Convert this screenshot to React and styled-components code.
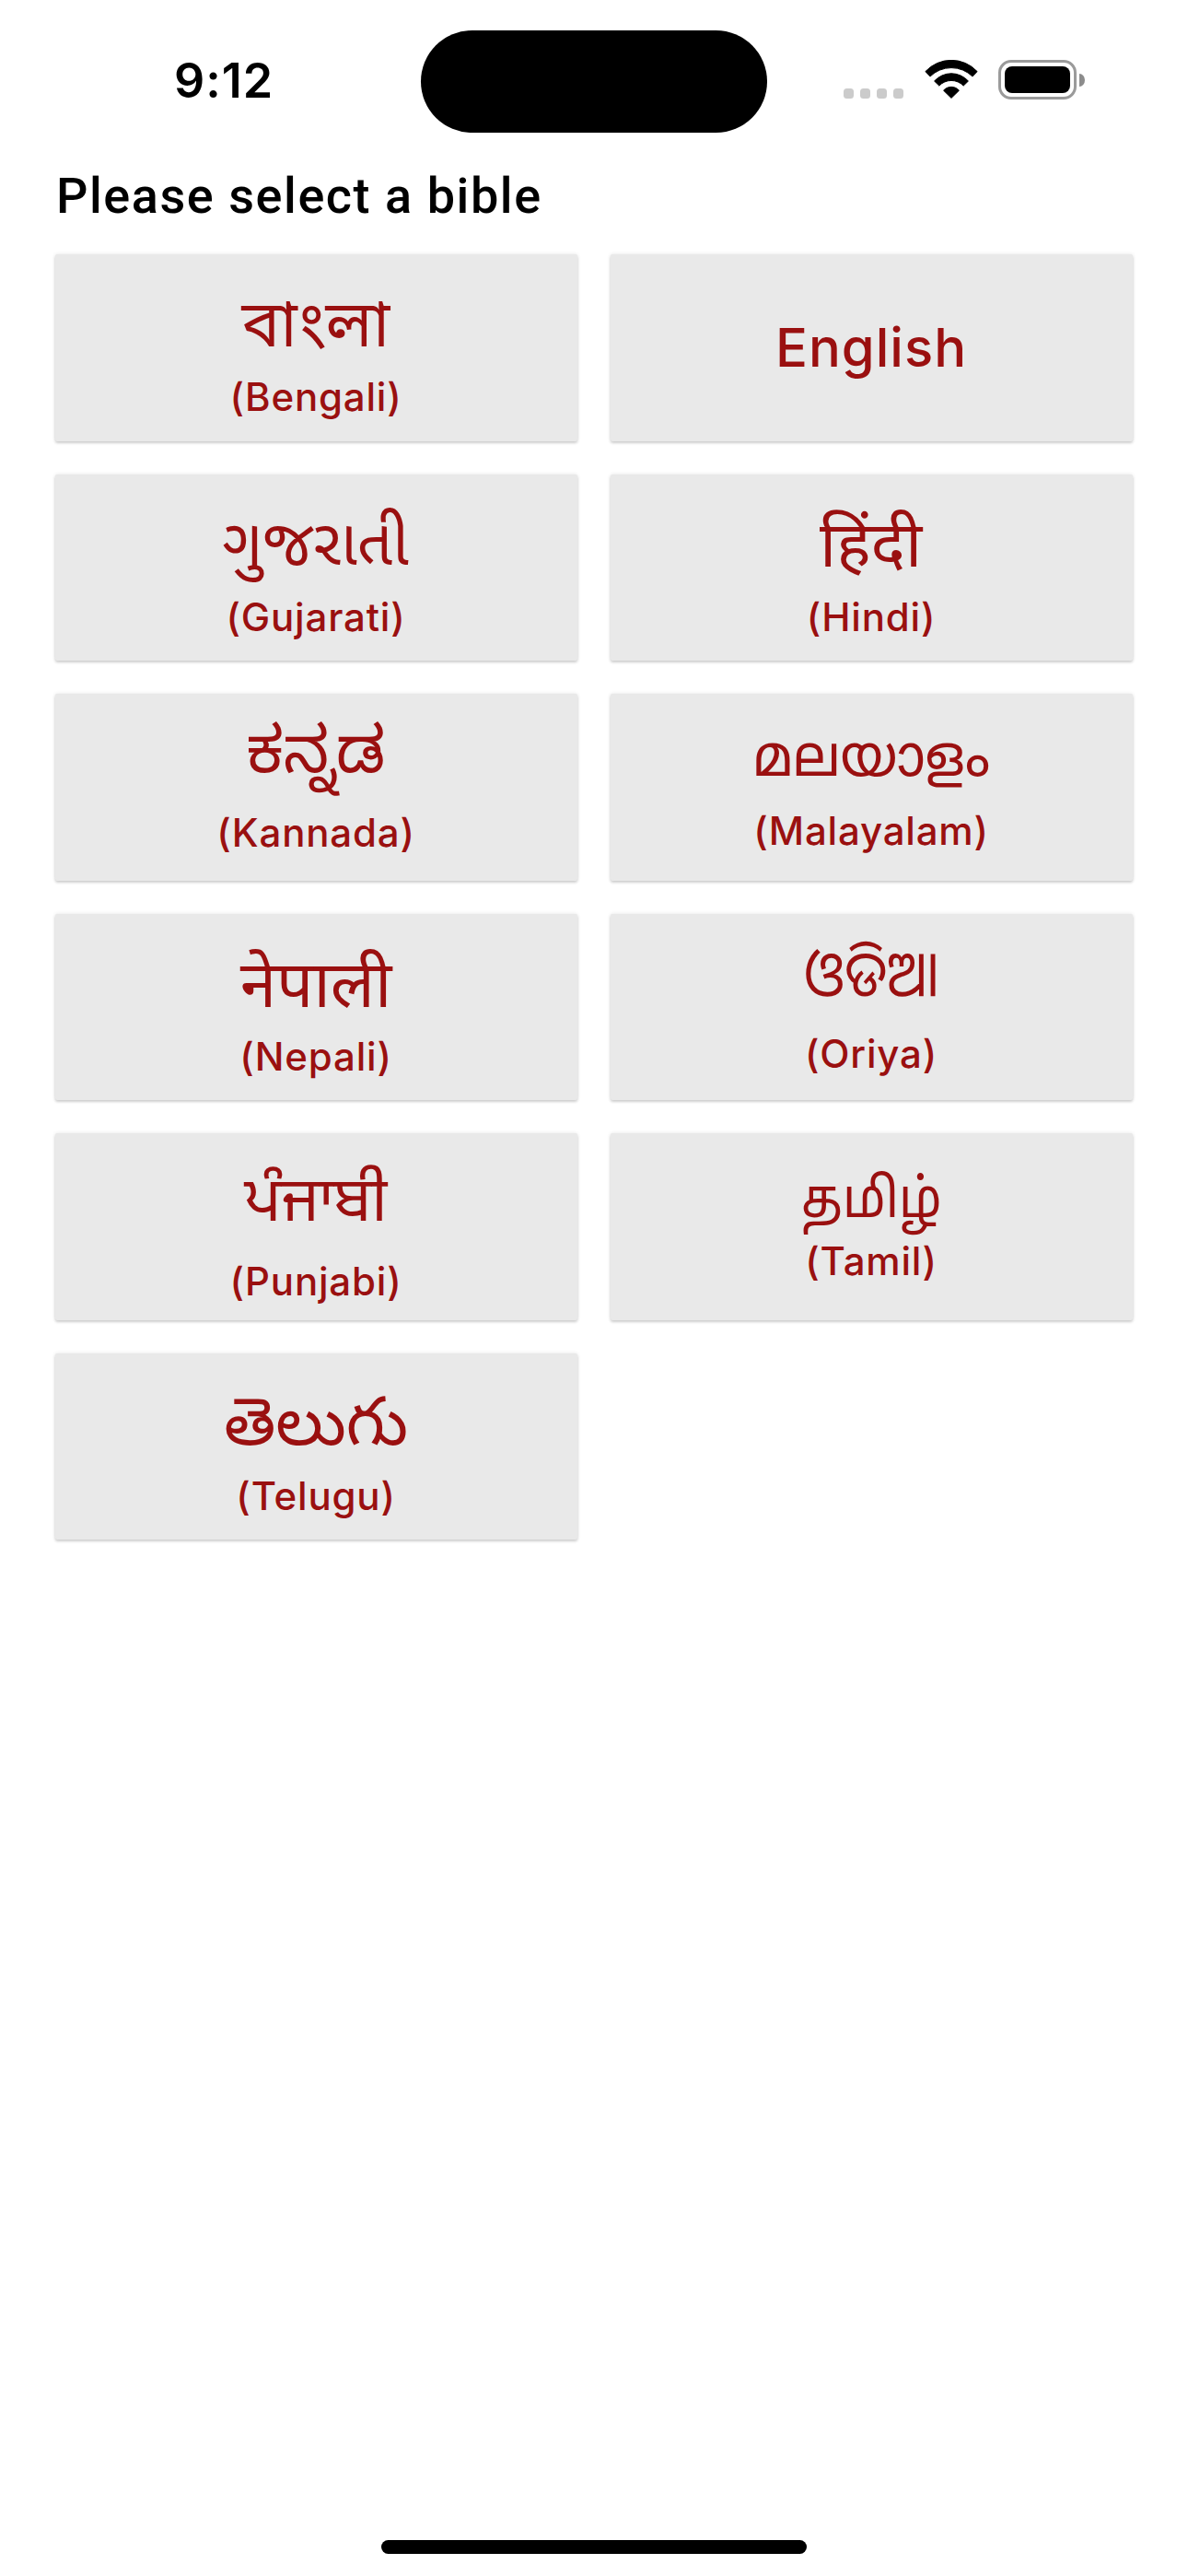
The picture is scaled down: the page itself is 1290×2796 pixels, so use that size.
import React from "react";
import styled, { createGlobalStyle } from "styled-components";

const GlobalStyle = createGlobalStyle`
  * { box-sizing: border-box; }
  body { margin: 0; background: #fff; }
`;

const Screen = styled.div`
  width: 1290px;
  height: 2796px;
  display: flex;
  flex-direction: column;
  background: #fff;
  overflow: hidden;
  font-family: Inter, "Noto Sans", sans-serif;
`;

const StatusBar = styled.header`
  height: 181px;
  padding: 33px 0 0 189px;
  display: flex;
  align-items: flex-start;
`;

const Clock = styled.div`
  width: 268px;
  padding-top: 24px;
  font-size: 52px;
  font-weight: 600;
  line-height: 62px;
  letter-spacing: 1px;
  color: #000;
`;

const Island = styled.div`
  width: 376px;
  height: 111px;
  border-radius: 56px;
  background: #000;
`;

const StatusIcons = styled.div`
  display: flex;
  align-items: flex-end;
  padding-top: 32px;
  margin-left: 83px;
`;

const SignalDots = styled.div`
  display: flex;
  gap: 7px;
  margin: 0 23px 1px 0;
`;

const Dot = styled.span`
  width: 11px;
  height: 11px;
  border-radius: 3.5px;
  background: #cbcbcb;
`;

const WifiGlyph = styled.svg`
  display: block;
  margin: 0 22px 1px 0;
`;

const Battery = styled.div`
  display: flex;
  align-items: center;
  gap: 3px;
`;

const BatteryShell = styled.div`
  width: 85px;
  height: 43px;
  padding: 4px;
  border: 3px solid #9a9a9a;
  border-radius: 14px;
`;

const BatteryCharge = styled.div`
  height: 100%;
  border-radius: 8px;
  background: #000;
`;

const BatteryTip = styled.div`
  width: 6px;
  height: 14px;
  border-radius: 0 6px 6px 0 / 0 7px 7px 0;
  background: #8c8c8c;
`;

const Main = styled.main`
  flex: 1;
  padding: 0 59.5px;
`;

const Heading = styled.h1`
  margin: 0 0 31px;
  padding-left: 1.5px;
  font-family: Roboto, "Noto Sans", sans-serif;
  font-size: 54px;
  font-weight: 500;
  line-height: 64px;
  letter-spacing: 1.55px;
  color: #000;
`;

const LanguageGrid = styled.div`
  display: grid;
  grid-template-columns: repeat(2, 567px);
  grid-auto-rows: 202.5px;
  gap: 36px;
`;

const LanguageCard = styled.button`
  display: flex;
  flex-direction: column;
  align-items: center;
  justify-content: ${(p) => (p.$centered ? "center" : "flex-start")};
  padding: 0;
  border: 0;
  border-radius: 2px;
  background: #e9e9e9;
  color: #9a1010;
  font-family: inherit;
  box-shadow: 0 2px 3px rgba(0, 0, 0, 0.16), 0 0 4px rgba(0, 0, 0, 0.1);
`;

const NativeName = styled.span`
  margin-top: ${(p) => p.$top}px;
  font-family: "Noto Sans ${(p) => p.$script}", "Noto Sans", sans-serif;
  font-size: ${(p) => p.$size}px;
  line-height: 70px;
  white-space: nowrap;
  transform: scaleX(${(p) => p.$stretch || 1});
`;

const EnglishTitle = styled.span`
  font-size: 58px;
  font-weight: 500;
  line-height: 70px;
  letter-spacing: 1px;
`;

const EnglishName = styled.span`
  margin-top: ${(p) => p.$gap}px;
  font-size: 42px;
  font-weight: 500;
  line-height: 50px;
  letter-spacing: 0.8px;
`;

const HomeArea = styled.footer`
  display: flex;
  justify-content: center;
  padding-bottom: 24px;
`;

const HomeIndicator = styled.div`
  width: 462px;
  height: 15px;
  border-radius: 8px;
  background: #000;
`;

const languages = [
  { name: "Bengali", native: "বাংলা", script: "Bengali", size: 70, top: 48, gap: 11.7 },
  { name: "English" },
  { name: "Gujarati", native: "ગુજરાતી", script: "Gujarati", size: 70, stretch: 0.955, top: 46, gap: 14.5 },
  { name: "Hindi", native: "हिंदी", script: "Devanagari", size: 69, stretch: 1.02, top: 48.4, gap: 12.1 },
  { name: "Kannada", native: "ಕನ್ನಡ", script: "Kannada", size: 70, top: 40.5, gap: 15.5 },
  { name: "Malayalam", native: "മലയാളം", script: "Malayalam", size: 63, stretch: 0.95, top: 39, gap: 15 },
  { name: "Nepali", native: "नेपाली", script: "Devanagari", size: 71, top: 49, gap: 11.5 },
  { name: "Oriya", native: "ଓଡିଆ", script: "Oriya", size: 69, stretch: 0.91, top: 27.6, gap: 29.9 },
  { name: "Punjabi", native: "ਪੰਜਾਬੀ", script: "Gurmukhi", size: 67.5, top: 43.5, gap: 22.5 },
  { name: "Tamil", native: "தமிழ்", script: "Tamil", size: 59.5, stretch: 0.915, top: 41.3, gap: 2.7 },
  { name: "Telugu", native: "తెలుగు", script: "Telugu", size: 72.5, top: 50.9, gap: 9.3 },
];

function WifiIcon() {
  return (
    <WifiGlyph width="58" height="42" viewBox="0 0 58 42">
      <g fill="#000" stroke="#000" strokeWidth="1" strokeLinejoin="round">
        <path d="M.9 12.6A38.3 38.3 0 0 1 57.1 12.6L52 18A32.8 32.8 0 0 0 6 18Z" />
        <path d="M10.6 23A24.7 24.7 0 0 1 47.4 23L42.2 28.1A18.2 18.2 0 0 0 15.8 28.1Z" />
        <path d="M20.6 33.2A11.1 11.1 0 0 1 37.4 33.2L29 41.4Z" />
      </g>
    </WifiGlyph>
  );
}

export default function App() {
  return (
    <Screen>
      <GlobalStyle />
      <StatusBar>
        <Clock>9:12</Clock>
        <Island />
        <StatusIcons>
          <SignalDots>
            <Dot />
            <Dot />
            <Dot />
            <Dot />
          </SignalDots>
          <WifiIcon />
          <Battery>
            <BatteryShell>
              <BatteryCharge />
            </BatteryShell>
            <BatteryTip />
          </Battery>
        </StatusIcons>
      </StatusBar>
      <Main>
        <Heading>Please select a bible</Heading>
        <LanguageGrid>
          {languages.map((l) => (
            <LanguageCard key={l.name} $centered={!l.native}>
              {l.native ? (
                <>
                  <NativeName $script={l.script} $size={l.size} $stretch={l.stretch} $top={l.top}>
                    {l.native}
                  </NativeName>
                  <EnglishName $gap={l.gap}>({l.name})</EnglishName>
                </>
              ) : (
                <EnglishTitle>{l.name}</EnglishTitle>
              )}
            </LanguageCard>
          ))}
        </LanguageGrid>
      </Main>
      <HomeArea>
        <HomeIndicator />
      </HomeArea>
    </Screen>
  );
}
